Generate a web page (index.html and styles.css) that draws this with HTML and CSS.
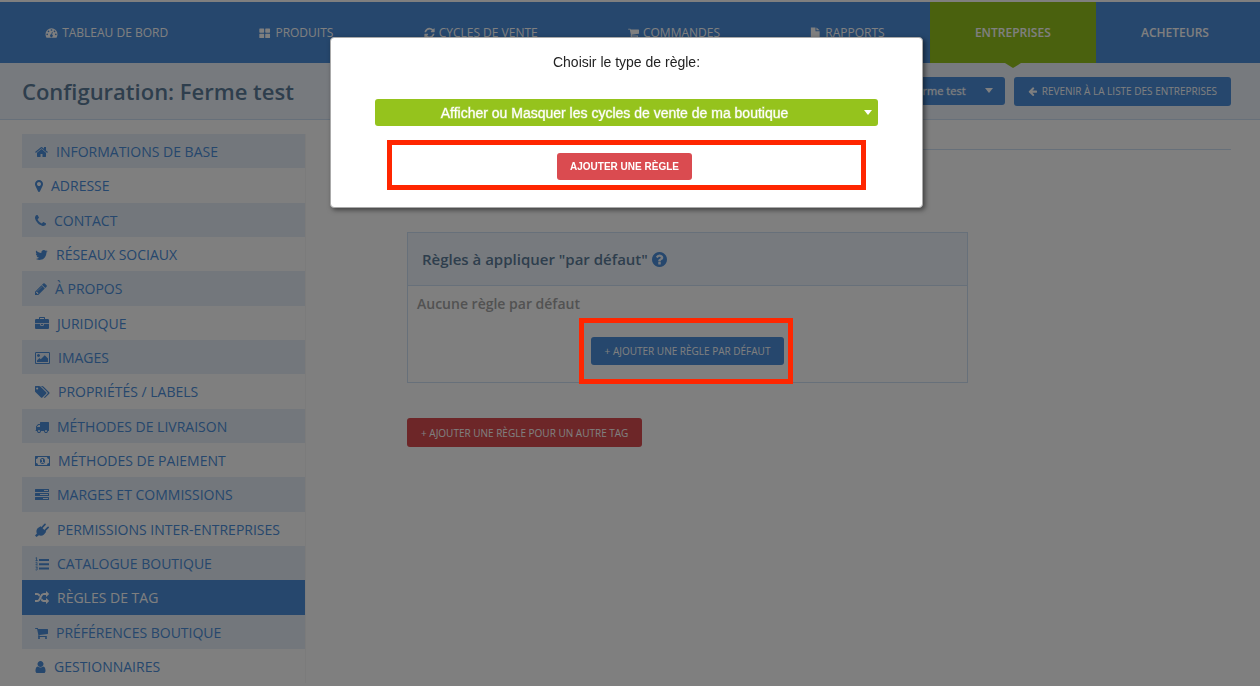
FILE: index.html
```html
<!DOCTYPE html>
<html lang="fr">
<head>
<meta charset="utf-8">
<title>Configuration: Ferme test</title>
<link rel="stylesheet" href="styles.css">
</head>
<body>
<svg class="sprite" aria-hidden="true">
  <symbol id="cart" viewBox="64 0 1664 1792"><path d="M704 1536q0 52-38 90t-90 38-90-38-38-90 38-90 90-38 90 38 38 90zm896 0q0 52-38 90t-90 38-90-38-38-90 38-90 90-38 90 38 38 90zm128-1088v512q0 24-16.500 42.500t-40.500 21.500l-1044 122q13 60 13 70 0 16-24 64h920q26 0 45 19t19 45-19 45-45 19h-1024q-26 0-45-19t-19-45q0-11 8-31.500t16-36 21.500-40 15.500-29.500l-177-823h-204q-26 0-45-19t-19-45 19-45 45-19h256q16 0 28.500 6.500t19.500 15.500 13 24.500 8 26 5.500 29.500 4.500 26h1201q26 0 45 19t19 45z"/></symbol>
  <symbol id="caret" viewBox="0 0 8 5"><path d="M0 0h8L4 5z"/></symbol>
</svg>

<header>
  <nav class="tabs">
    <a href="#"><svg class="icon w13" viewBox="0 0 14 14"><path fill-rule="evenodd" d="M7 1.500a7 7 0 0 0-7 7c0 1.400.4 2.600 1 3.700.2.200.4.300.6.300h10.800c.2 0 .4-.1.600-.3.600-1.100 1-2.300 1-3.700a7 7 0 0 0-7-7zM2 7.500a1 1 0 1 1 0 2 1 1 0 0 1 0-2zM3.500 4a1 1 0 1 1 0 2 1 1 0 0 1 0-2zM7 2.500a1 1 0 1 1 0 2 1 1 0 0 1 0-2zM10.500 4a1 1 0 1 1 0 2 1 1 0 0 1 0-2zM12 7.500a1 1 0 1 1 0 2 1 1 0 0 1 0-2zM7.600 5.500l.9.200-.8 3.100a1.600 1.600 0 1 1-1-.2z"/></svg>TABLEAU DE BORD</a>
    <a href="#"><svg class="icon w13" viewBox="0 0 13 13"><path d="M1.500 1.500H5.500a.6.600 0 0 1 .6.600V5.500a.6.600 0 0 1-.6.600H1.500a.6.600 0 0 1-.6-.6V2.100a.6.600 0 0 1 .6-.6zM7.900 1.500h4a.6.600 0 0 1 .6.600V5.500a.6.600 0 0 1-.6.600h-4a.6.600 0 0 1-.6-.6V2.100a.6.600 0 0 1 .6-.6zM1.500 7.300H5.500a.6.600 0 0 1 .6.600v3.400a.6.600 0 0 1-.6.600H1.500a.6.600 0 0 1-.6-.6V7.900a.6.600 0 0 1 .6-.6zM7.900 7.300h4a.6.600 0 0 1 .6.600v3.400a.6.600 0 0 1-.6.600h-4a.6.600 0 0 1-.6-.6V7.900a.6.600 0 0 1 .6-.6z"/></svg>PRODUITS</a>
    <a href="#"><svg class="icon w11" viewBox="128 0 1536 1792"><path d="M1639 1056q0 5-1 7-64 268-268 434.500t-478 166.500q-146 0-282.500-55t-243.500-157l-129 129q-19 19-45 19t-45-19-19-45v-448q0-26 19-45t45-19h448q26 0 45 19t19 45-19 45l-137 137q71 66 161 102t187 36q134 0 250-65t186-179q11-17 53-117 8-23 30-23h192q13 0 22.500 9.500t9.500 22.500zm25-800v448q0 26-19 45t-45 19h-448q-26 0-45-19t-19-45 19-45l138-138q-148-137-349-137-134 0-250 65t-186 179q-11 17-53 117-8 23-30 23h-199q-13 0-22.500-9.500t-9.500-22.500v-7q65-268 270-434.500t480-166.500q146 0 284 55.500t245 156.500l130-129q19-19 45-19t45 19 19 45z"/></svg>CYCLES DE VENTE</a>
    <a href="#"><svg class="icon w11"><use href="#cart"/></svg>COMMANDES</a>
    <a href="#"><svg class="icon w11" viewBox="0 0 11 13"><path d="M.5.500h5v4h4.500v8H.5zM6.500.500l3.500 3h-3.500z"/></svg>RAPPORTS</a>
    <a href="#" class="current">ENTREPRISES</a>
    <a href="#" class="strong">ACHETEURS</a>
  </nav>
  <div class="titlebar">
    <h1>Configuration: Ferme test</h1>
    <div class="actions">
      <div class="picker shop"><select aria-label="Entreprise"><option>Ferme test</option></select><svg><use href="#caret"/></svg></div>
      <a class="btn back" href="#"><svg class="icon w9" viewBox="64 128 1600 1600"><path d="M1664 896v128q0 53-32.500 90.500t-84.500 37.500h-704l293 294q38 36 38 90t-38 90l-75 76q-37 37-90 37-52 0-91-37l-651-652q-37-37-37-90 0-52 37-91l651-650q38-38 91-38 52 0 90 38l75 74q38 38 38 91t-38 91l-293 293h704q52 0 84.500 37.500t32.500 90.500z"/></svg>REVENIR À LA LISTE DES ENTREPRISES</a>
    </div>
  </div>
</header>

<div class="content">
  <ul class="side">
    <li><a href="#"><svg class="icon w13" viewBox="64 0 1664 1792"><path d="M1472 992v480q0 26-19 45t-45 19h-384v-384h-256v384h-384q-26 0-45-19t-19-45v-480q0-1 .5-3t.5-3l575-474 575 474q1 2 1 6zm223-69l-62 74q-8 9-21 11h-3q-13 0-21-7l-692-577-692 577q-12 8-24 7-13-2-21-11l-62-74q-8-10-7-23.500t11-21.500l719-599q32-26 76-26t76 26l244 204v-195q0-14 9-23t23-9h192q14 0 23 9t9 23v408l219 182q10 8 11 21.500t-7 23.500z"/></svg>INFORMATIONS DE BASE</a></li>
    <li><a href="#"><svg class="icon w8" viewBox="384 0 1024 1792"><path d="M1152 640q0-106-75-181t-181-75-181 75-75 181 75 181 181 75 181-75 75-181zm256 0q0 109-33 179l-364 774q-16 33-47.500 52t-67.500 19-67.500-19-46.500-52l-365-774q-33-70-33-179 0-212 150-362t362-150 362 150 150 362z"/></svg>ADRESSE</a></li>
    <li><a href="#"><svg class="icon w11" viewBox="192 0 1408 1792"><path d="M1600 1240q0 27-10 70.500t-21 68.500q-21 50-122 106-94 51-186 51-27 0-53-3.500t-57.500-12.500-47-14.500-55.500-20.500-49-18q-98-35-175-83-127-79-264-216t-216-264q-48-77-83-175-3-9-18-49t-20.500-55.500-14.500-47-12.500-57.500-3.500-53q0-92 51-186 56-101 106-122 25-11 68.500-21t70.500-10q14 0 21 3 18 6 53 76 11 19 30 54t35 63.500 31 53.500q3 4 17.500 25t21.500 35.500 7 28.500q0 20-28.500 50t-62 55-62 53-28.500 46q0 9 5 22.500t8.500 20.500 14 24 11.500 19q76 137 174 235t235 174q2 1 19 11.500t24 14 20.500 8.500 22.500 5q18 0 46-28.500t53-62 55-62 50-28.500q14 0 28.500 7t35.500 21.500 25 17.500q25 15 53.500 31t63.500 35 54 30q70 35 76 53 3 7 3 21z"/></svg>CONTACT</a></li>
    <li><a href="#"><svg class="icon w13" viewBox="64 0 1664 1792"><path d="M1684 408q-67 98-162 167 1 14 1 42 0 130-38 259.500t-115.500 248.500-184.500 210.500-258 146-323 54.500q-271 0-496-145 35 4 78 4 225 0 401-138-105-2-188-64.500t-114-159.500q33 5 61 5 43 0 85-11-112-23-185.500-111.500t-73.500-205.500v-4q68 38 146 41-66-44-105-115t-39-154q0-88 44-163 121 149 294.500 238.500t371.500 99.500q-8-38-8-74 0-134 94.500-228.500t228.500-94.500q140 0 236 102 109-21 205-78-37 115-142 178 93-10 186-50z"/></svg>RÉSEAUX SOCIAUX</a></li>
    <li><a href="#"><svg class="icon w12" viewBox="128 0 1536 1792"><path d="M491 1536l91-91-235-235-91 91v107h128v128h107zm523-928q0-22-22-22-10 0-17 7l-542 542q-7 7-7 17 0 22 22 22 10 0 17-7l542-542q7-7 7-17zm-54-192l416 416-832 832h-416v-416zm683 96q0 53-37 90l-166 166-416-416 166-165q36-38 90-38 53 0 91 38l235 234q37 39 37 91z"/></svg>À PROPOS</a></li>
    <li><a href="#"><svg class="icon w14" viewBox="0 0 1792 1792"><path d="M640 256h512v-128h-512v128zm1152 640v480q0 66-47 113t-113 47h-1472q-66 0-113-47t-47-113v-480h672v160q0 26 19 45t45 19h320q26 0 45-19t19-45v-160h672zm-768 0v128h-256v-128h256zm768-480v384h-1792v-384q0-66 47-113t113-47h352v-160q0-40 28-68t68-28h576q40 0 68 28t28 68v160h352q66 0 113 47t47 113z"/></svg>JURIDIQUE</a></li>
    <li><a href="#"><svg class="icon w15" viewBox="-64 0 1920 1792"><path d="M576 576q0 80-56 136t-136 56-136-56-56-136 56-136 136-56 136 56 56 136zm1024 384v448h-1408v-192l320-320 160 160 512-512zm96-704h-1600q-13 0-22.500 9.500t-9.500 22.500v1216q0 13 9.500 22.500t22.500 9.500h1600q13 0 22.500-9.500t9.500-22.500v-1216q0-13-9.500-22.500t-22.500-9.500zm160 32v1216q0 66-47 113t-113 47h-1600q-66 0-113-47t-47-113v-1216q0-66 47-113t113-47h1600q66 0 113 47t47 113z"/></svg>IMAGES</a></li>
    <li><a href="#"><svg class="icon w15" viewBox="-20 0 1920 1792"><path d="M384 448q0-53-37.500-90.500t-90.500-37.500-90.500 37.500-37.500 90.500 37.500 90.500 90.500 37.500 90.500-37.500 37.500-90.500zm1067 576q0 53-37 90l-491 492q-39 37-91 37-53 0-90-37l-715-716q-38-37-64.500-101t-26.500-117v-416q0-52 38-90t90-38h416q53 0 117 26.500t102 64.500l715 714q37 39 37 91zm384 0q0 53-37 90l-491 492q-39 37-91 37-36 0-59-14t-53-45l470-470q37-37 37-90 0-52-37-91l-715-714q-38-38-102-64.500t-117-26.500h224q53 0 117 26.500t102 64.500l715 714q37 39 37 91z"/></svg>PROPRIÉTÉS / LABELS</a></li>
    <li><a href="#"><svg class="icon w14" viewBox="0 0 1792 1792"><path d="M640 1408q0-52-38-90t-90-38-90 38-38 90 38 90 90 38 90-38 38-90zm-384-512h384v-256h-158q-13 0-22 9l-195 195q-9 9-9 22v30zm1280 512q0-52-38-90t-90-38-90 38-38 90 38 90 90 38 90-38 38-90zm256-1088v1024q0 15-4 26.500t-13.500 18.500-16.500 11.500-23.500 6-22.500 2-25.500 0-22.500-.5q0 106-75 181t-181 75-181-75-75-181h-384q0 106-75 181t-181 75-181-75-75-181h-64q-3 0-22.500.5t-25.500 0-22.500-2-23.500-6-16.500-11.500-13.500-18.500-4-26.500q0-26 19-45t45-19v-320q0-8-.5-35t0-38 2.500-34.500 6.500-37 14-30.500 22.500-30l198-198q19-19 50.500-32t58.500-13h160v-192q0-26 19-45t45-19h1024q26 0 45 19t19 45z"/></svg>MÉTHODES DE LIVRAISON</a></li>
    <li><a href="#"><svg class="icon w15" viewBox="0 0 15 14"><path fill-rule="evenodd" d="M.5 2h14a.5.500 0 0 1 .5.500v9a.5.500 0 0 1-.5.500H.5a.5.500 0 0 1-.5-.5v-9A.5.500 0 0 1 .5 2zM3 3a2 2 0 0 1-2 2v4a2 2 0 0 1 2 2h9a2 2 0 0 1 2-2V5a2 2 0 0 1-2-2zM7.500 4c1.500 0 2.500 1.300 2.500 3s-1 3-2.500 3S5 8.700 5 7s1-3 2.500-3zM7 5l-1 .8.400.6.600-.4v2H6v.8h3V8H8V5z"/></svg>MÉTHODES DE PAIEMENT</a></li>
    <li><a href="#"><svg class="icon w14" viewBox="0 0 14 14"><path fill-rule="evenodd" d="M.5 1h13a.5.500 0 0 1 .5.500v2a.5.500 0 0 1-.5.500H.5a.5.500 0 0 1-.5-.5v-2A.5.500 0 0 1 .5 1zM9 2v1h4V2zM.5 5h13a.5.500 0 0 1 .5.500v2a.5.500 0 0 1-.5.500H.5a.5.500 0 0 1-.5-.5v-2A.5.500 0 0 1 .5 5zM5 6v1h8V6zM.5 9h13a.5.500 0 0 1 .5.500v2a.5.500 0 0 1-.5.500H.5a.5.500 0 0 1-.5-.5v-2A.5.500 0 0 1 .5 9zM8 10v1h5v-1z"/></svg>MARGES ET COMMISSIONS</a></li>
    <li><a href="#"><svg class="icon w14" viewBox="0 0 14 14"><path d="M2.600 5.200L5.600 3.200l5.600 5.500-2.200 2.700c-1.600 1.400-3.500 1.600-5.100.8L1.500 14 0 12.600l1.900-2.200C1.100 8.700 1.300 6.700 2.600 5.200z"/><path d="M6.600 5L10 1.300M9.600 7.900l3.500-3.500" stroke="currentColor" stroke-width="1.700" stroke-linecap="round"/></svg>PERMISSIONS INTER-ENTREPRISES</a></li>
    <li><a href="#"><svg class="icon w14" viewBox="0 0 14 14"><path d="M4 2H14v2H4zM4 6.200H14v2H4zM4 10.500H14v2H4z"/><path d="M.6 1L1.600.6v3M.5 3.600h2.200M.6 5.700c1.800-1 2.300.4.200 2.200h2M.6 10h1.900l-1 1.200c1.800.1 1 2.400-.9 1.600" fill="none" stroke="currentColor" stroke-width=".9"/></svg>CATALOGUE BOUTIQUE</a></li>
    <li class="active"><a href="#"><svg class="icon w14" viewBox="0 0 1792 1792"><path d="M666 481q-60 92-137 273-22-45-37-72.500t-40.500-63.500-51-56.500-63-35-81.500-14.500h-224q-14 0-23-9t-9-23v-192q0-14 9-23t23-9h224q250 0 410 225zm1126 799q0 14-9 23l-320 320q-9 9-23 9-13 0-22.500-9.500t-9.500-22.500v-192q-32 0-85 .5t-81 1-73-1-71-5-64-10.500-63-18.500-58-28.500-59-40-55-53.500-56-69.500q59-93 136-273 22 45 37 72.500t40.500 63.500 51 56.500 63 35 81.500 14.500h256v-192q0-14 9-23t23-9q12 0 24 10l319 319q9 9 9 23zm0-896q0 14-9 23l-320 320q-9 9-23 9-13 0-22.500-9.500t-9.500-22.500v-192h-256q-48 0-87 15t-69 45-51 61.500-45 77.500q-32 62-78 171-29 66-49.500 111t-54 105-64 100-74 83-90 68.500-106.500 42-128 16.500h-224q-14 0-23-9t-9-23v-192q0-14 9-23t23-9h224q48 0 87-15t69-45 51-61.500 45-77.500q32-62 78-171 29-66 49.500-111t54-105 64-100 74-83 90-68.500 106.500-42 128-16.500h256v-192q0-14 9-23t23-9q12 0 24 10l319 319q9 9 9 23z"/></svg>RÈGLES DE TAG</a></li>
    <li><a href="#"><svg class="icon w13"><use href="#cart"/></svg>PRÉFÉRENCES BOUTIQUE</a></li>
    <li><a href="#"><svg class="icon w11" viewBox="192 0 1408 1792"><path d="M1536 1399q0 109-62.500 187t-150.500 78h-854q-88 0-150.500-78t-62.500-187q0-85 8.500-160.500t31.500-152 58.500-131 94-89 134.500-34.500q131 128 313 128t313-128q76 0 134.500 34.500t94 89 58.500 131 31.500 152 8.500 160.500zm-256-887q0 159-112.500 271.500t-271.500 112.500-271.500-112.500-112.500-271.500 112.500-271.500 271.500-112.500 271.500 112.500 112.500 271.500z"/></svg>GESTIONNAIRES</a></li>
  </ul>

  <main>
    <hr>
    <div class="rules">
      <section class="panel">
        <h2>Règles à appliquer "par défaut"<svg class="help" viewBox="128 128 1536 1536"><path d="M1024 1376v-192q0-14-9-23t-23-9h-192q-14 0-23 9t-9 23v192q0 14 9 23t23 9h192q14 0 23-9t9-23zm256-672q0-88-55.500-163t-138.500-116-170-41q-243 0-371 213-15 24 8 42l132 100q7 6 19 6 16 0 25-12 53-68 86-92 34-24 86-24 48 0 85.500 26t37.500 59q0 38-20 61t-68 45q-63 28-115.500 86.500t-52.500 125.500v36q0 14 9 23t23 9h192q14 0 23-9t9-23q0-19 21.500-49.500t54.500-49.500q32-18 49-28.500t46-35 44.500-48 28-60.500 12.500-81zm384 192q0 209-103 385.500t-279.500 279.500-385.500 103-385.500-103-279.500-279.500-103-385.500 103-385.500 279.500-279.500 385.500-103 385.500 103 279.500 279.500 103 385.500z"/></svg></h2>
        <p>Aucune règle par défaut</p>
        <div class="add">
          <button type="button" class="btn">+ AJOUTER UNE RÈGLE PAR DÉFAUT</button>
          <span class="marker"></span>
        </div>
      </section>
      <button type="button" class="btn red">+ AJOUTER UNE RÈGLE POUR UN AUTRE TAG</button>
    </div>
  </main>
</div>

<div class="overlay"></div>
<div class="dialog" role="dialog" aria-modal="true">
  <label for="rule-type">Choisir le type de règle:</label>
  <div class="picker type"><select id="rule-type"><option>Afficher ou Masquer les cycles de vente de ma boutique</option></select><svg><use href="#caret"/></svg></div>
  <div class="confirm"><button type="button">AJOUTER UNE RÈGLE</button></div>
</div>
</body>
</html>
```
FILE: styles.css
```css
* { box-sizing: border-box; }

body {
  margin: 0;
  padding-top: 2px;
  background: #fff;
  color: #4c8eda;
  font-family: "Open Sans", sans-serif;
  font-size: 14px;
}

a { color: inherit; text-decoration: none; }
button, select { border: 0; font: inherit; }

.sprite { position: absolute; width: 0; height: 0; }
.icon { flex: none; height: 14px; fill: currentColor; }
.w8 { width: 8px; }
.w9 { width: 9px; height: 9px; }
.w11 { width: 11px; }
.w12 { width: 12px; }
.w13 { width: 13px; }
.w14 { width: 14px; }
.w15 { width: 15px; }

/* Navigation */
.tabs {
  display: flex;
  padding-right: 6px;
  background: #4c8eda;
  color: #fff;
  font-size: 12px;
}
.tabs a {
  position: relative;
  display: flex;
  flex: 1 1 auto;
  align-items: center;
  justify-content: center;
  gap: 4px;
  height: 61px;
  white-space: nowrap;
}
.tabs .icon { height: 12px; }
.tabs .current { background: #95c31d; font-weight: 600; }
.tabs .strong { font-weight: 600; }
.tabs .current::after {
  content: "";
  position: absolute;
  top: 100%;
  left: 50%;
  margin-left: -8px;
  border: 8px solid transparent;
  border-top: 5px solid #95c31d;
  border-bottom: 0;
}

.titlebar {
  display: flex;
  align-items: center;
  justify-content: space-between;
  height: 57px;
  padding: 0 29px 0 22px;
  border-bottom: 1px solid #cee1f4;
  background: #eff5fc;
}
h1 { margin: 0; color: #5c7d9a; font-size: 22px; font-weight: 600; }
.actions { display: flex; gap: 9px; }

.btn {
  display: flex;
  align-items: center;
  justify-content: center;
  gap: 5px;
  height: 28px;
  padding: 0 14px;
  border-radius: 3px;
  background: #4c8eda;
  color: #fff;
  font-size: 10px;
}
.btn.back { height: 29px; }
.btn.red { height: 29px; margin-top: 35px; background: #da4c50; }

.picker { position: relative; }
.picker select {
  width: 100%;
  height: 28px;
  border-radius: 3px;
  appearance: none;
  color: #fff;
}
.picker svg {
  position: absolute;
  top: 11px;
  right: 6px;
  width: 8px;
  height: 5px;
  fill: #fff;
}
.shop { width: 130px; }
.shop select {
  padding-left: 36px;
  background: #4c8eda;
  font-size: 11px;
  -webkit-text-stroke: 1px rgba(255, 255, 255, .3);
}
.picker.shop svg { right: 12px; }

/* Page body */
.content { display: flex; gap: 30px; padding: 14px 29px 0 22px; }
.side {
  flex: none;
  width: 284px;
  margin: 0;
  padding: 0;
  border-right: 1px solid #f6f6f6;
  list-style: none;
}
.side a {
  display: flex;
  align-items: center;
  gap: 8px;
  height: 34px;
  padding: 1px 0 0 13px;
}
.side li:nth-child(3n+2) { padding-bottom: 1px; }
.side li:nth-child(odd) { background: #e6eff8; }
.side .active:nth-child(n) { background: #4c8eda; color: #fff; }

main { flex: 1; }
hr {
  height: 1px;
  margin: 15px 0 82px;
  border: 0;
  background: #cee1f4;
}
.rules {
  display: flex;
  flex-direction: column;
  align-items: flex-start;
  padding-left: 71px;
}
.panel { width: 100%; max-width: 561px; border: 1px solid #cee1f4; }
.panel h2 {
  display: flex;
  align-items: center;
  gap: 4px;
  height: 53px;
  margin: 0;
  padding-left: 14px;
  border-bottom: 1px solid #cee1f4;
  background: #eff5fc;
  color: #5c7d9a;
  font-size: 15px;
  font-weight: 600;
}
.help { width: 15px; height: 15px; fill: #4c8eda; }
.panel p {
  margin: 8px 9px 23px;
  color: #a5a5a5;
  font-size: 14px;
  font-weight: 600;
  line-height: 20px;
}
.add { position: relative; width: fit-content; margin: 0 auto 17px; }
.marker {
  position: absolute;
  z-index: 20;
  inset: -19px -9px -19px -12px;
  border: 5px solid #ff2600;
}

/* Dialog */
.overlay { position: fixed; z-index: 10; inset: 0; background: rgba(0, 0, 0, .5); }
.dialog {
  position: absolute;
  z-index: 30;
  top: 37px;
  left: calc(50% - 300px);
  width: 593px;
  padding: 15px 44px 17px;
  border: 1px solid #aaa;
  border-radius: 4px;
  background: #fff;
  box-shadow: 2px 2px 5px rgba(0, 0, 0, .5);
  color: #222;
  font-family: "Liberation Sans", Arial, sans-serif;
  font-size: 14px;
}
.dialog label { display: block; line-height: 18px; text-align: center; }
.type { margin: 28px 0 14px; }
.type select {
  display: block;
  height: 27px;
  padding: 0 24px 0 0;
  background: #95c31d;
  text-align: center;
  text-align-last: center;
  -webkit-text-stroke: 1px rgba(255, 255, 255, .4);
}
.confirm {
  display: flex;
  justify-content: center;
  margin: 0 12px;
  padding: 8px 12px 5px 8px;
  border: 5px solid #ff2600;
}
.confirm button {
  height: 27px;
  padding: 0 13px;
  border-radius: 3px;
  background: #da4b50;
  color: #fff;
  font-size: 10px;
  font-weight: 700;
}
```
